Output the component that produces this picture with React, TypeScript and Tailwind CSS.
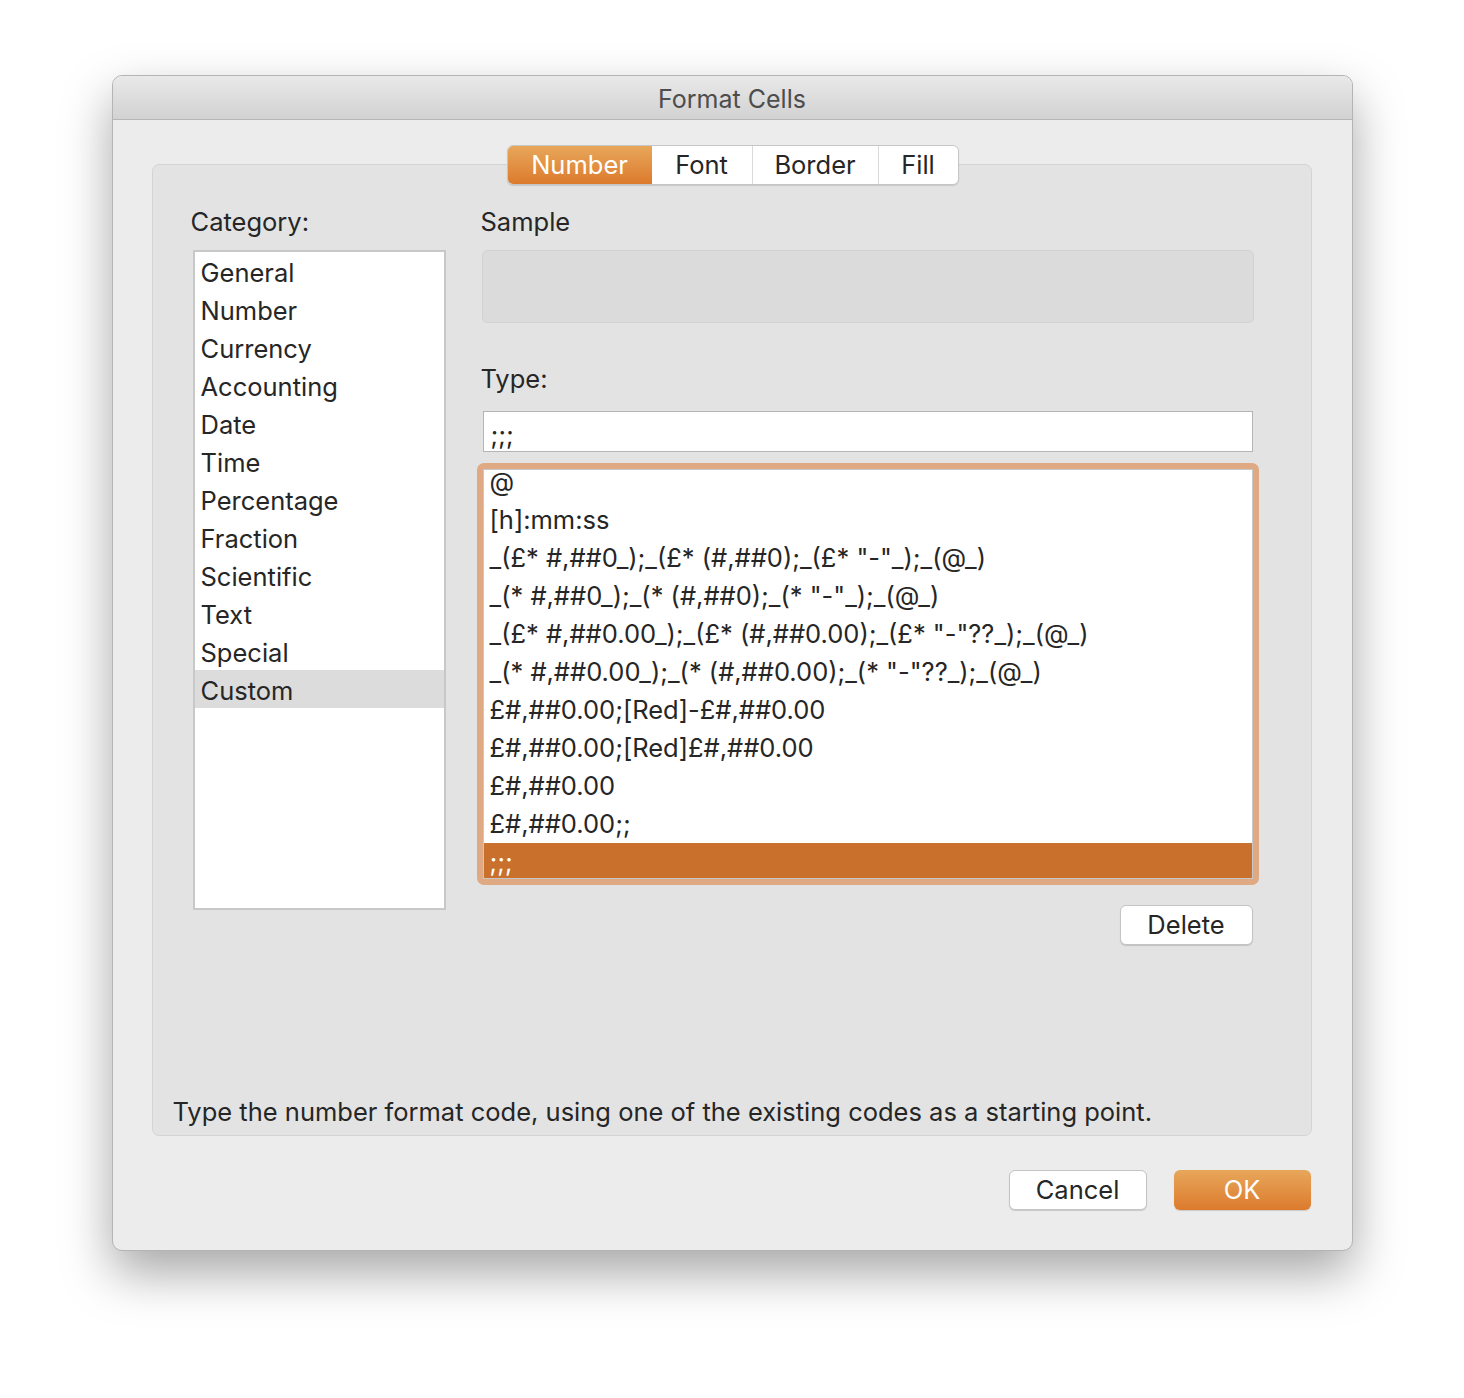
import React from "react";

const categories = [
  "General",
  "Number",
  "Currency",
  "Accounting",
  "Date",
  "Time",
  "Percentage",
  "Fraction",
  "Scientific",
  "Text",
  "Special",
  "Custom",
];

const formats = [
  "@",
  "[h]:mm:ss",
  '_(£* #,##0_);_(£* (#,##0);_(£* "-"_);_(@_)',
  '_(* #,##0_);_(* (#,##0);_(* "-"_);_(@_)',
  '_(£* #,##0.00_);_(£* (#,##0.00);_(£* "-"??_);_(@_)',
  '_(* #,##0.00_);_(* (#,##0.00);_(* "-"??_);_(@_)',
  "£#,##0.00;[Red]-£#,##0.00",
  "£#,##0.00;[Red]£#,##0.00",
  "£#,##0.00",
  "£#,##0.00;;",
  ";;;",
];

export default function App() {
  return (
    <div
      className="w-full h-[1398px] bg-white flex justify-center pt-[75px] text-[#262626]"
      style={{ fontFamily: "Inter, 'Noto Sans', sans-serif" }}
    >
      <div className="w-[1241px] h-[1176px] bg-[#ececec] rounded-[10px] border border-[#b4b4b4] shadow-[0_22px_50px_rgba(0,0,0,0.35)] flex flex-col overflow-hidden">
        {/* Title bar */}
        <div className="h-[44px] shrink-0 bg-gradient-to-b from-[#e9e9e9] to-[#d2d2d2] border-b border-[#b6b6b6] flex items-center justify-center pt-[5px]">
          <span className="text-[25px] text-[#4d4d4d]">Format Cells</span>
        </div>

        {/* Body */}
        <div className="flex-1 flex flex-col pl-[39px] pr-[40px] pt-[24px]">
          {/* Tabs */}
          <div className="flex justify-center relative z-10 pt-[1px] -mb-[21px] pl-[2px]">
            <div className="flex h-[40px] rounded-[6px] border border-[#c6c6c6] bg-white shadow-[0_1px_1px_rgba(0,0,0,0.12)] overflow-hidden text-[25.5px]">
              <div className="w-[144px] flex items-center justify-center bg-gradient-to-b from-[#e7a75a] to-[#dc7a2c] text-white">
                Number
              </div>
              <div className="w-[101px] flex items-center justify-center border-r border-[#dadada]">Font</div>
              <div className="w-[126px] flex items-center justify-center border-r border-[#dadada]">Border</div>
              <div className="w-[79px] flex items-center justify-center">Fill</div>
            </div>
          </div>

          {/* Panel */}
          <div className="w-[1160px] h-[972px] bg-[#e3e3e3] border border-[#d4d4d4] rounded-[7px] flex flex-col">
            <div className="flex pt-[42px] pl-[38px]">
              {/* Left column */}
              <div className="w-[254px] flex flex-col">
                <div className="text-[25.5px] h-[30px] leading-[30px]">Category:</div>
                <div className="mt-[13px] ml-[2px] w-[253px] h-[660px] bg-white border-2 border-[#c8c8c8] flex flex-col">
                  {categories.map((c) => (
                    <div
                      key={c}
                      className={
                        "h-[38px] leading-[36px] pt-[3px] pl-[6px] text-[25.5px] " +
                        (c === "Custom" ? "bg-[#dcdcdc]" : "")
                      }
                    >
                      {c}
                    </div>
                  ))}
                </div>
              </div>

              {/* Right column */}
              <div className="ml-[36px] w-[774px] flex flex-col">
                <div className="text-[25.5px] h-[30px] leading-[30px]">Sample</div>
                <div className="mt-[13px] ml-[1px] w-[772px] h-[73px] bg-[#dbdbdb] border border-[#d2d2d2] rounded-[5px]" />
                <div className="mt-[41px] text-[25.5px] h-[30px] leading-[30px]">Type:</div>
                <div className="mt-[17px] ml-[2px] w-[770px] h-[41px] bg-white border border-[#b5b5b5] flex items-end pl-[7px] pb-[1px] text-[25.5px] leading-[30px]">
                  ;;;
                </div>
                <div className="mt-[11px] -ml-[4px] w-[782px] h-[422px] rounded-[7px] bg-[#dfa983] p-[6px]">
                  <div className="w-full h-full bg-white border border-[#c7c7c7] overflow-hidden">
                    <div className="-mt-[7px] flex flex-col">
                      {formats.map((f) => (
                        <div
                          key={f}
                          className={
                            "shrink-0 h-[38px] leading-[38px] pl-[6px] text-[25.5px] whitespace-pre " +
                            (f === ";;;" ? "bg-[#c8702c] text-white" : "")
                          }
                        >
                          {f}
                        </div>
                      ))}
                    </div>
                  </div>
                </div>
                <div className="mt-[20px] flex justify-end pr-[2px]">
                  <div className="w-[133px] h-[40px] bg-white border border-[#c4c4c4] rounded-[6px] shadow-[0_1px_1px_rgba(0,0,0,0.15)] flex items-center justify-center text-[25.5px]">
                    Delete
                  </div>
                </div>
              </div>
            </div>
            <div className="flex-1" />
            <div className="pl-[20px] pb-[7px] text-[25.5px] h-[38px] leading-[30px] whitespace-nowrap">
              Type the number format code, using one of the existing codes as a starting point.
            </div>
          </div>

          {/* Bottom buttons */}
          <div className="flex justify-end gap-[27px] mt-[34px] pr-[1px]">
            <div className="w-[138px] h-[40px] bg-white border border-[#c4c4c4] rounded-[6px] shadow-[0_1px_1px_rgba(0,0,0,0.15)] flex items-center justify-center text-[25.5px]">
              Cancel
            </div>
            <div className="w-[137px] h-[40px] rounded-[6px] bg-gradient-to-b from-[#e7a75a] to-[#dc7a2c] shadow-[0_1px_1px_rgba(0,0,0,0.15)] flex items-center justify-center text-[25.5px] text-white">
              OK
            </div>
          </div>
        </div>
      </div>
    </div>
  );
}
